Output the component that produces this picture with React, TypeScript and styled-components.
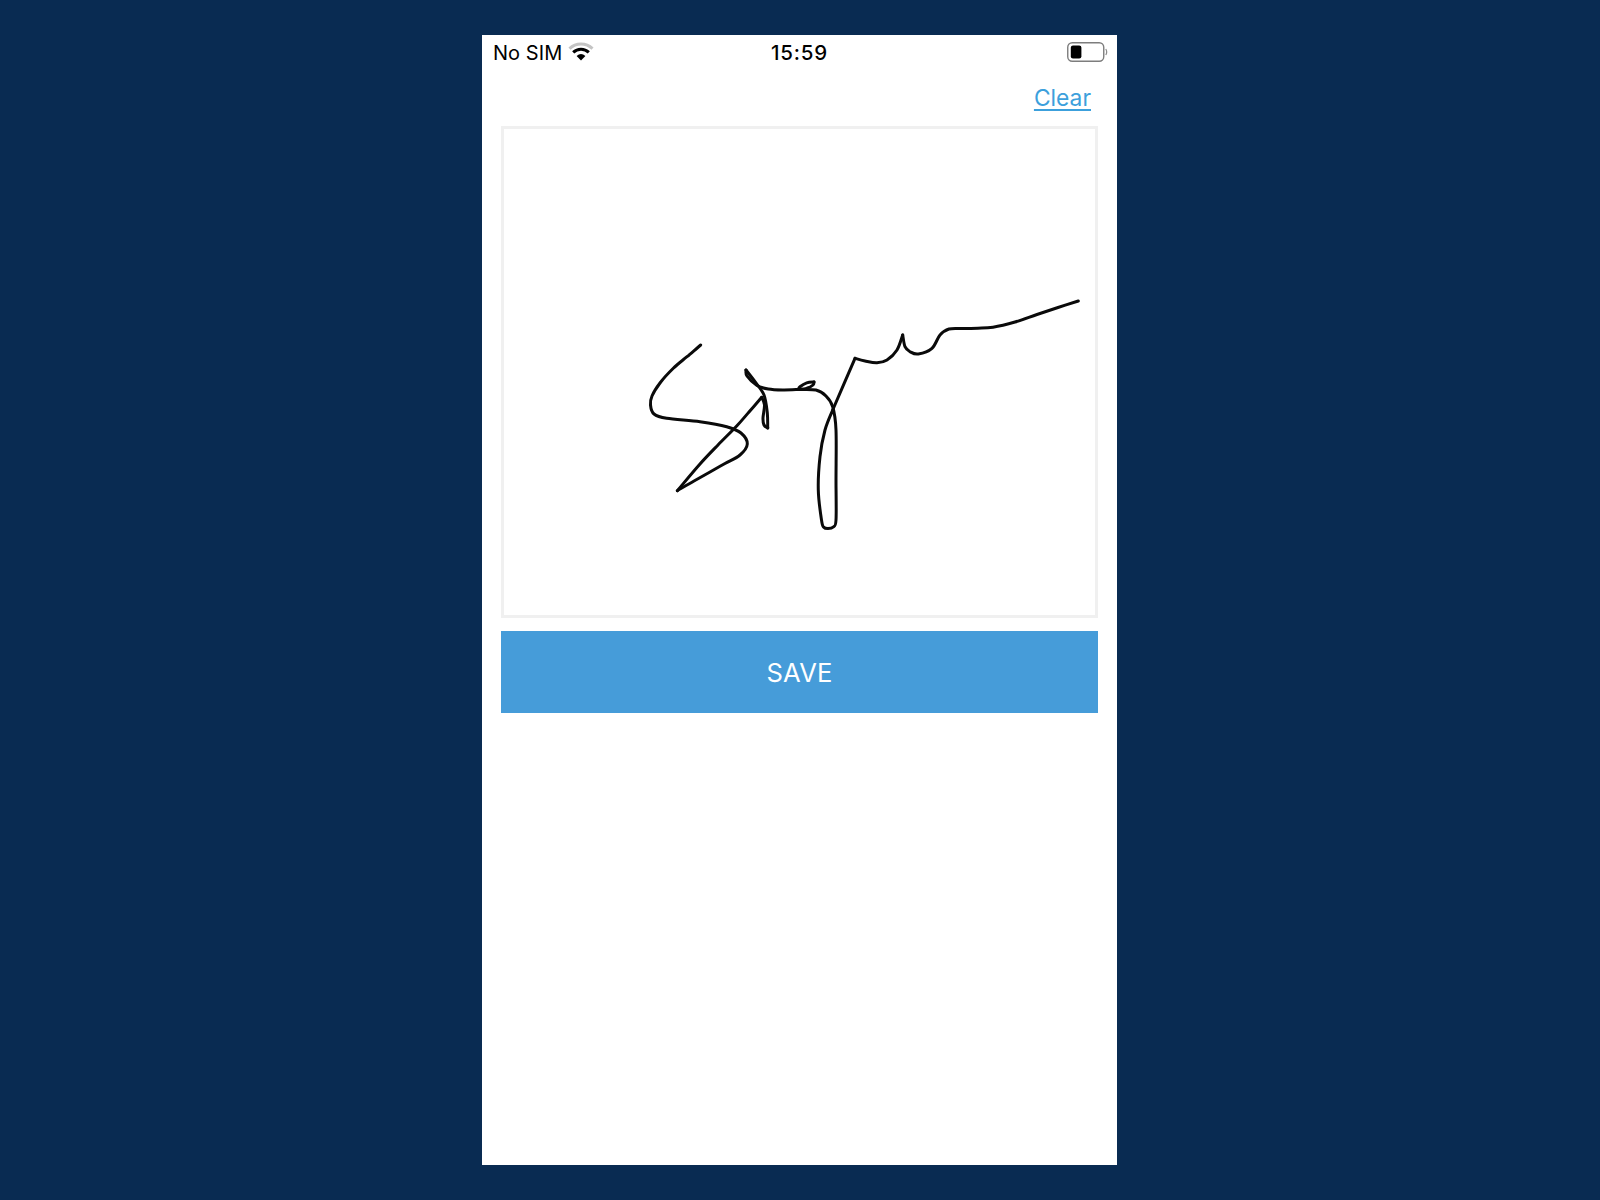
import React from "react";
import styled, { createGlobalStyle } from "styled-components";

const Global = createGlobalStyle`
  html, body { margin: 0; padding: 0; background: #092b52; }
  body { font-family: Inter, "Liberation Sans", sans-serif; }
`;

const Page = styled.div`
  width: 1600px;
  height: 1200px;
  box-sizing: border-box;
  padding: 35px 0 0 482px;
  background: #092b52;
  overflow: hidden;
`;

const Phone = styled.main`
  width: 635px;
  height: 1130px;
  background: #fff;
  display: flex;
  flex-direction: column;
`;

const StatusBar = styled.header`
  height: 34px;
  padding: 0 9px 0 11px;
  display: grid;
  grid-template-columns: 1fr auto 1fr;
  align-items: center;
  color: #000;
  font-size: 20px;
`;

const Carrier = styled.div`
  display: flex;
  align-items: center;
  gap: 6px;
  letter-spacing: 0.05px;
`;

const CarrierName = styled.span`
  padding-top: 1px;
`;

const Clock = styled.div`
  font-weight: 500;
  font-size: 20.5px;
  letter-spacing: 0.8px;
  margin-left: -2px;
`;

const BatteryWrap = styled.div`
  justify-self: end;
  display: flex;
  margin-bottom: 1px;
`;

const Actions = styled.div`
  height: 57px;
  padding: 0 26px 0 0;
  display: flex;
  justify-content: flex-end;
  align-items: flex-start;
`;

const ClearLink = styled.a`
  margin-top: 14px;
  font-size: 22.8px;
  line-height: 30px;
  color: #3ca0dc;
  text-decoration: underline;
  text-decoration-thickness: 2px;
  text-underline-offset: 3px;
  cursor: pointer;
`;

const SignatureBox = styled.div`
  margin: 0 19px;
  height: 492px;
  box-sizing: border-box;
  border: 3px solid #f0f0f0;
`;

const SignatureSvg = styled.svg`
  display: block;
  width: 591px;
  height: 486px;
`;

const SaveButton = styled.button`
  margin: 13px 19px 0;
  height: 82px;
  border: 0;
  background: #469cd9;
  color: #fff;
  font-family: Inter, "Liberation Sans", sans-serif;
  font-size: 25.6px;
  letter-spacing: 0.2px;
  padding: 1px 0 0;
  cursor: pointer;
`;

type Pt = [number, number];

/* traced from the reference, in page coordinates; each list is a smooth run between cusps */
const strokes: Pt[][] = [
  [[700.7,345],[687,356.7],[673.3,368.3],[660,383],[652,396],[650.5,405],[654,414],[666.7,418.3],[700,421.7],[726.7,426.7],[741,433],[747.3,444],[740,455],[725,463.5],[710,472],[694,481],[677.3,490.7]],
  [[677.3,490.7],[700,464],[718,445],[736.7,426],[749,412],[761.7,397.3]],
  [[761.7,397.3],[764.5,405],[763,418],[764,425],[767.7,428]],
  [[767.7,428],[767.3,413],[764,395],[755,381.7],[746,370]],
  [[746,370],[747,376],[757,385.5],[768.3,389],[783,390],[798.3,389.5]],
  [[798.3,389.5],[800,386.7],[806.7,382.9],[814,382]],
  [[814,382],[813,385],[806.7,388.3],[798.3,389.5]],
  [[798.3,389.5],[816,390],[826,396],[832.7,406.7],[836,430],[836,480],[836,520],[833.3,527],[828,528.6],[823.5,527],[821.5,520],[818.3,490],[820,456.7],[825,430],[832.7,410]],
  [[832.7,410],[855,358.3]],
  [[855,358.3],[865,361],[877,362.7],[887,360],[897,350],[902.7,335]],
  [[902.7,335],[905,346.7],[910,351.7],[918.3,354],[932,348.3],[940,335],[949,329],[962,328.5],[978,328.2],[993,327.2],[1015,322],[1037,314.5],[1058,307.5],[1078.3,301]],
];

const toPath = (pts: Pt[]) => {
  let d = `M${pts[0][0]} ${pts[0][1]}`;
  for (let i = 0; i < pts.length - 1; i++) {
    const p0 = pts[Math.max(0, i - 1)];
    const p1 = pts[i];
    const p2 = pts[i + 1];
    const p3 = pts[Math.min(pts.length - 1, i + 2)];
    const c1x = p1[0] + (p2[0] - p0[0]) / 6;
    const c1y = p1[1] + (p2[1] - p0[1]) / 6;
    const c2x = p2[0] - (p3[0] - p1[0]) / 6;
    const c2y = p2[1] - (p3[1] - p1[1]) / 6;
    d += ` C${c1x.toFixed(1)} ${c1y.toFixed(1)} ${c2x.toFixed(1)} ${c2y.toFixed(1)} ${p2[0]} ${p2[1]}`;
  }
  return d;
};

const WifiIcon = () => (
  <svg width="26" height="20" viewBox="0 0 26 20">
    <path d="M1.5 6.6 A16.5 16.5 0 0 1 24.5 6.6" fill="none" stroke="#c4c4c4" strokeWidth="3" />
    <path d="M5.2 10.4 A11.2 11.2 0 0 1 20.8 10.4" fill="none" stroke="#000" strokeWidth="3" />
    <path d="M8.6 14 Q13 10.2 17.4 14 L13 18.6 Z" fill="#000" />
  </svg>
);

const BatteryIcon = () => (
  <svg width="41" height="20" viewBox="0 0 41 20">
    <rect x="0.75" y="0.75" width="36" height="18.5" rx="4.5" fill="none" stroke="#7d7d7d" strokeWidth="1.4" />
    <rect x="3.8" y="3.5" width="10.6" height="13" rx="2.2" fill="#000" />
    <path d="M38.8 7 Q40.6 10 38.8 13" fill="none" stroke="#8c8c8c" strokeWidth="1.2" />
  </svg>
);

export default function App() {
  return (
    <>
      <Global />
      <Page>
        <Phone>
          <StatusBar>
            <Carrier>
              <CarrierName>No SIM</CarrierName>
              <WifiIcon />
            </Carrier>
            <Clock>15:59</Clock>
            <BatteryWrap>
              <BatteryIcon />
            </BatteryWrap>
          </StatusBar>
          <Actions>
            <ClearLink>Clear</ClearLink>
          </Actions>
          <SignatureBox>
            <SignatureSvg viewBox="504 129 591 486">
              {strokes.map((s, i) => (
                <path key={i} d={toPath(s)} fill="none" stroke="#0a0a0a" strokeWidth="3" strokeLinecap="round" strokeLinejoin="round" />
              ))}
            </SignatureSvg>
          </SignatureBox>
          <SaveButton>SAVE</SaveButton>
        </Phone>
      </Page>
    </>
  );
}
